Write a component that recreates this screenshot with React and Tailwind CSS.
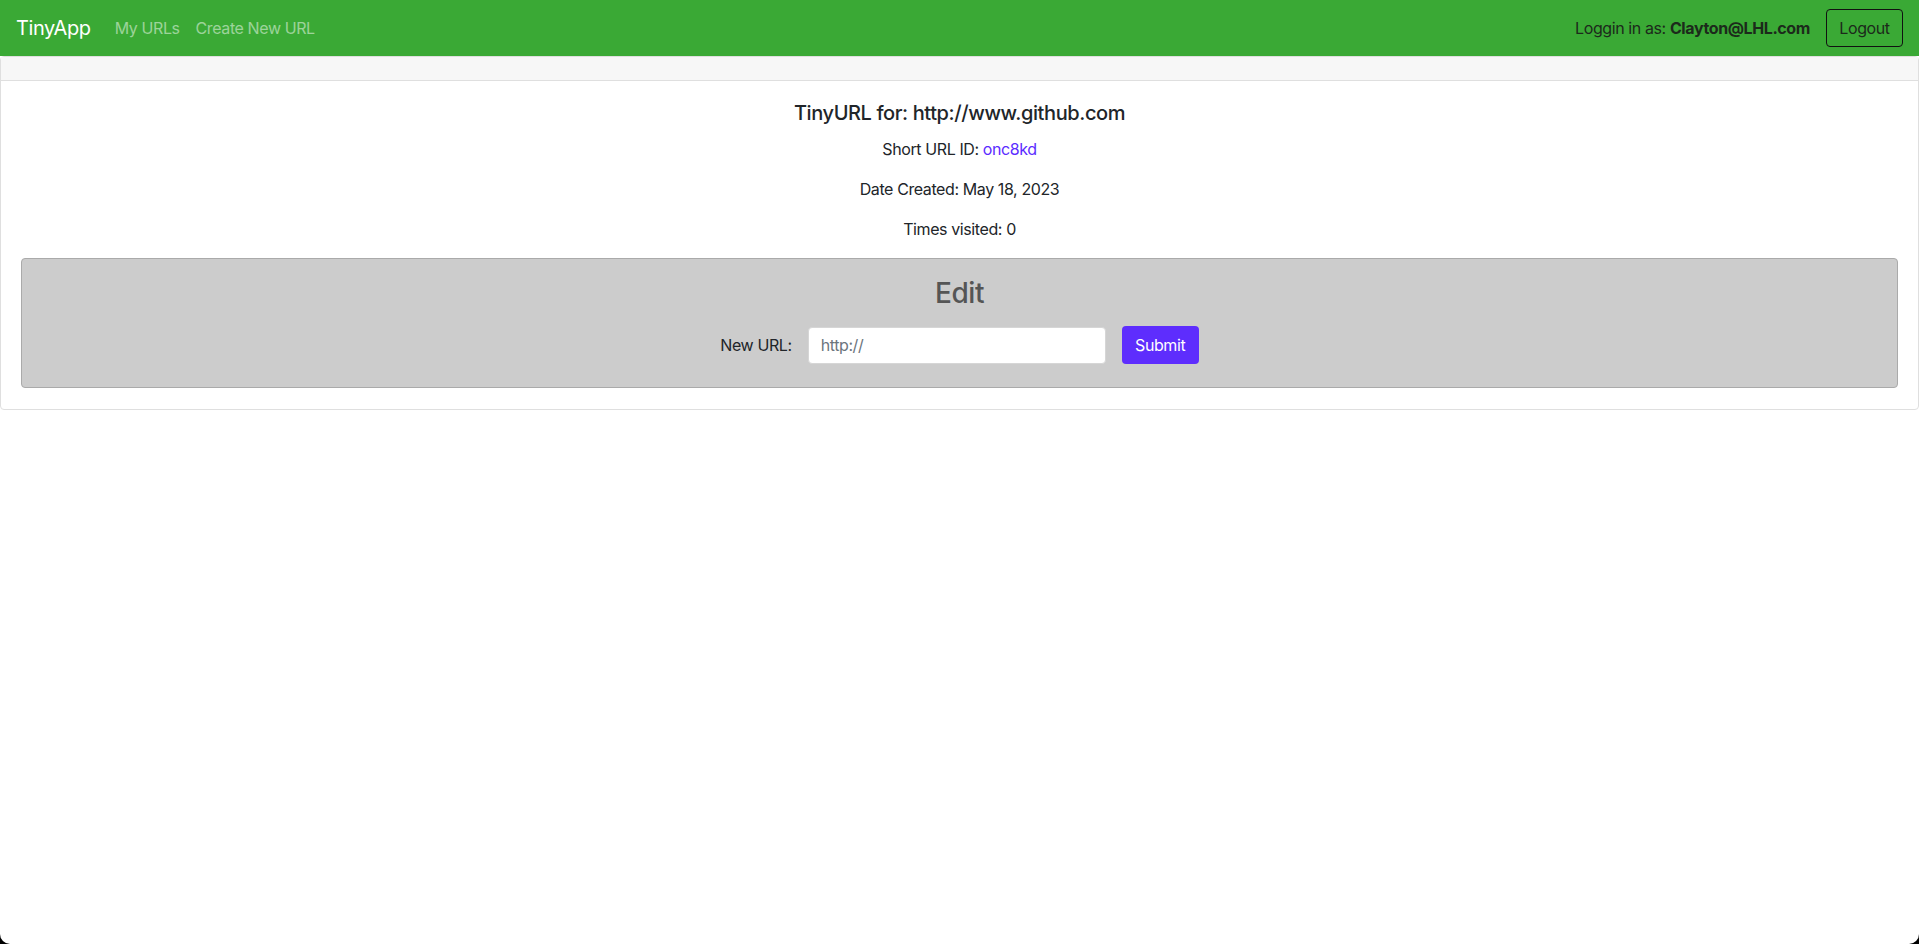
import React from 'react';

const NavLink = ({ children }) => (
    <a href="#" className="px-2 text-white/50 hover:text-white/75">
        {children}
    </a>
);

const App = () => {
    return (
        <div className="h-screen bg-black">
            <div className="h-full bg-white rounded-b-[10px] overflow-hidden font-['Inter','Liberation_Sans',sans-serif] tracking-[-0.025em] text-[#212529] text-base leading-6">
                {/* Navbar */}
                <nav className="h-[56px] bg-[#3aa935] px-4 flex items-center justify-between">
                    <div className="flex items-center">
                        <a href="#" className="text-white text-[20px] leading-[30px] mr-4">TinyApp</a>
                        <NavLink>My URLs</NavLink>
                        <NavLink>Create New URL</NavLink>
                    </div>
                    <div className="flex items-center">
                        <span className="text-[#1c2a1b]">
                            Loggin in as: <b className="font-bold">Clayton@LHL.com</b>
                        </span>
                        <button className="ml-4 h-[38px] w-[77px] border border-[#111] rounded-[4px] text-[#1c2a1b]">
                            Logout
                        </button>
                    </div>
                </nav>

                {/* Card */}
                <div className="border border-[#dfdfdf] rounded-[4px]">
                    <div className="h-[24px] bg-[#f7f7f7] border-b border-[#dfdfdf]"></div>
                    <div className="px-5 pt-5 pb-[21px] text-center">
                        <h5 className="text-[20px] leading-[24px] font-medium mb-3">
                            TinyURL for: http://www.github.com
                        </h5>
                        <p className="mb-4">
                            Short URL ID: <a href="#" className="text-[#5b2cff]">onc8kd</a>
                        </p>
                        <p className="mb-4">Date Created: May 18, 2023</p>
                        <p className="mb-[17px]">Times visited: 0</p>

                        <div className="bg-[#cccccc] border border-[#aaaaaa] rounded-[4px] pt-[17px] pb-[23px]">
                            <h3 className="text-[28px] leading-[34px] font-medium text-[#555555] mb-4">Edit</h3>
                            <form className="flex items-center justify-center" onSubmit={(e) => e.preventDefault()}>
                                <label className="mr-4">New URL:</label>
                                <input
                                    type="text"
                                    placeholder="http://"
                                    className="w-[298px] h-[37px] px-3 bg-white border border-[#d6d6d6] rounded-[4px] placeholder:text-[#6c757d] outline-none"
                                />
                                <button className="ml-4 w-[77px] h-[38px] bg-[#5e2dfd] text-white rounded-[4px]">
                                    Submit
                                </button>
                            </form>
                        </div>
                    </div>
                </div>
            </div>
        </div>
    );
};

export default App;
